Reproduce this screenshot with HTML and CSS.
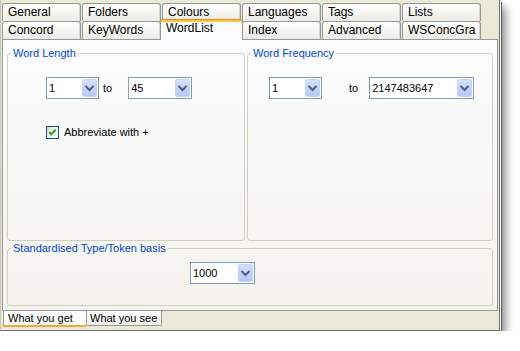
FILE: index.html
```html
<!DOCTYPE html>
<html>
<head>
    <meta charset="UTF-8">
    <title>WordList settings</title>
    <link rel="stylesheet" href="styles.css">
</head>
<body>
    <div class="window">
        <div class="tabstrip">
            <div class="tab-row">
                <div class="tab">General</div>
                <div class="tab">Folders</div>
                <div class="tab">Colours</div>
                <div class="tab">Languages</div>
                <div class="tab">Tags</div>
                <div class="tab">Lists</div>
            </div>
            <div class="tab-row">
                <div class="tab">Concord</div>
                <div class="tab">KeyWords</div>
                <div class="tab active">WordList</div>
                <div class="tab">Index</div>
                <div class="tab">Advanced</div>
                <div class="tab">WSConcGra</div>
            </div>
        </div>

        <div class="page">
            <div class="group-row">
                <fieldset class="group length">
                    <legend>Word Length</legend>
                    <div class="range">
                        <div class="combo narrow">
                            <span class="value">1</span>
                            <span class="drop"><svg viewBox="0 0 13 16" width="13" height="16"><path d="M2.5 6l4 4 4-4" /></svg></span>
                        </div>
                        <span class="to">to</span>
                        <div class="combo medium">
                            <span class="value">45</span>
                            <span class="drop"><svg viewBox="0 0 13 16" width="13" height="16"><path d="M2.5 6l4 4 4-4" /></svg></span>
                        </div>
                    </div>
                    <label class="check">
                        <span class="box"><svg viewBox="0 0 11 11" width="11" height="11"><path d="M2.2 5.2l2 2.2 4.4-4.6" /></svg></span>
                        Abbreviate with +
                    </label>
                </fieldset>

                <fieldset class="group freq">
                    <legend>Word Frequency</legend>
                    <div class="range">
                        <div class="combo narrow">
                            <span class="value">1</span>
                            <span class="drop"><svg viewBox="0 0 13 16" width="13" height="16"><path d="M2.5 6l4 4 4-4" /></svg></span>
                        </div>
                        <span class="to">to</span>
                        <div class="combo wide">
                            <span class="value">2147483647</span>
                            <span class="drop"><svg viewBox="0 0 13 16" width="13" height="16"><path d="M2.5 6l4 4 4-4" /></svg></span>
                        </div>
                    </div>
                </fieldset>
            </div>

            <fieldset class="group sttr">
                <legend>Standardised Type/Token basis</legend>
                <div class="combo basis">
                    <span class="value">1000</span>
                    <span class="drop"><svg viewBox="0 0 13 16" width="13" height="16"><path d="M2.5 6l4 4 4-4" /></svg></span>
                </div>
            </fieldset>
        </div>

        <div class="subtabs">
            <div class="subtab active">What you get</div>
            <div class="subtab">What you see</div>
        </div>
    </div>
</body>
</html>
```

FILE: styles.css
```css
body {
    margin: 0;
    background-color: #fff;
    font-family: "Liberation Sans", Arial, sans-serif;
    font-size: 11px;
    color: #000;
}

.window {
    width: 500px;
    height: 331px;
    box-sizing: border-box;
    padding-left: 1px;
    background-color: #ece9d8;
    border-left: 1px solid #c9c6b8;
    border-right: 1px solid #6e6e6e;
    border-bottom: 1px solid #6e6e6e;
    box-shadow: 1px 1px 0 #fff, 2px 2px 0 #5f5f5f, 5px 7px 9px rgba(0, 0, 0, 0.5);
}

/* top tab control */
.tabstrip {
    padding-top: 3px;
}

.tab-row {
    display: flex;
    gap: 1px;
}

.tab {
    width: 79px;
    height: 18px;
    box-sizing: border-box;
    padding-left: 5px;
    border: 1px solid #919b9c;
    border-bottom: none;
    border-radius: 3px 3px 0 0;
    background: linear-gradient(#fefefd, #ecebe5);
    box-shadow: inset -1px 0 0 #dcdad0;
    font-size: 12px;
    line-height: 17px;
    white-space: nowrap;
    overflow: hidden;
}

.tab.active {
    position: relative;
    z-index: 1;
    width: 83px;
    height: 21px;
    margin: -2px -2px -1px -2px;
    background: #fcfcfe;
    border-top: 1px solid #e68b2c;
    box-shadow: inset 0 2px 0 #ffc73c;
    line-height: 17px;
}

.page {
    width: 496px;
    height: 272px;
    box-sizing: border-box;
    padding: 7px 4px 0 4px;
    border: 1px solid #919b9c;
    background: linear-gradient(#fcfcfe, #f4f3ee);
}

/* group boxes */
.group-row {
    display: flex;
    gap: 2px;
    height: 194px;
}

.group {
    margin: 0;
    padding: 0;
    min-width: 0;
    box-sizing: border-box;
    border: 1px solid #d0d0bf;
    border-radius: 3px;
}

.group legend {
    margin-left: 3px;
    padding: 0 2px;
    color: #0046d5;
    font-size: 11px;
    line-height: 13px;
}

.length {
    width: 238px;
}

.freq {
    flex: 1;
}

.sttr {
    margin-top: 1px;
    height: 64px;
}

.range {
    display: flex;
    align-items: center;
    margin: 17px 0 0 38px;
}

.freq .range {
    margin-left: 21px;
}

.to {
    margin: 0 16px 0 4px;
}

.freq .to {
    margin: 0 11px 0 27px;
}

/* combo boxes */
.combo {
    display: flex;
    align-items: center;
    justify-content: space-between;
    height: 22px;
    box-sizing: border-box;
    padding: 1px;
    border: 1px solid #7f9db9;
    background-color: #fff;
}

.combo .value {
    padding-left: 1px;
}

.combo.narrow { width: 53px; }
.combo.medium { width: 64px; }
.combo.wide { width: 105px; }

.combo.basis {
    width: 65px;
    margin: 7px 0 0 182px;
}

.drop {
    display: flex;
    align-items: center;
    justify-content: center;
    width: 15px;
    height: 18px;
    box-sizing: border-box;
    border: 1px solid #c4d3fb;
    border-radius: 2px;
    background: linear-gradient(#d5e0fd, #b6c8f6);
}

.drop path {
    fill: none;
    stroke: #4d6185;
    stroke-width: 2;
}

/* checkbox */
.check {
    display: flex;
    align-items: center;
    gap: 5px;
    margin: 27px 0 0 38px;
    line-height: 13px;
}

.check .box {
    display: flex;
    width: 13px;
    height: 13px;
    box-sizing: border-box;
    border: 1px solid #1c5180;
    background: linear-gradient(135deg, #dcdcd7, #fff);
}

.check path {
    fill: none;
    stroke: #21a121;
    stroke-width: 2;
}

/* bottom tabs */
.subtabs {
    display: flex;
    padding-left: 1px;
}

.subtab {
    width: 76px;
    height: 15px;
    box-sizing: border-box;
    padding-left: 3px;
    border: 1px solid #919b9c;
    border-top: none;
    border-radius: 0 0 2px 2px;
    background: linear-gradient(#fefefd, #f0efe9);
    line-height: 14px;
    white-space: nowrap;
}

.subtab.active {
    width: 83px;
    height: 16px;
    padding-left: 4px;
    border: none;
    border-left: 1px solid #919b9c;
    border-bottom: 2px solid #f4a636;
    border-radius: 0;
    background: #fcfcfe;
}
```
